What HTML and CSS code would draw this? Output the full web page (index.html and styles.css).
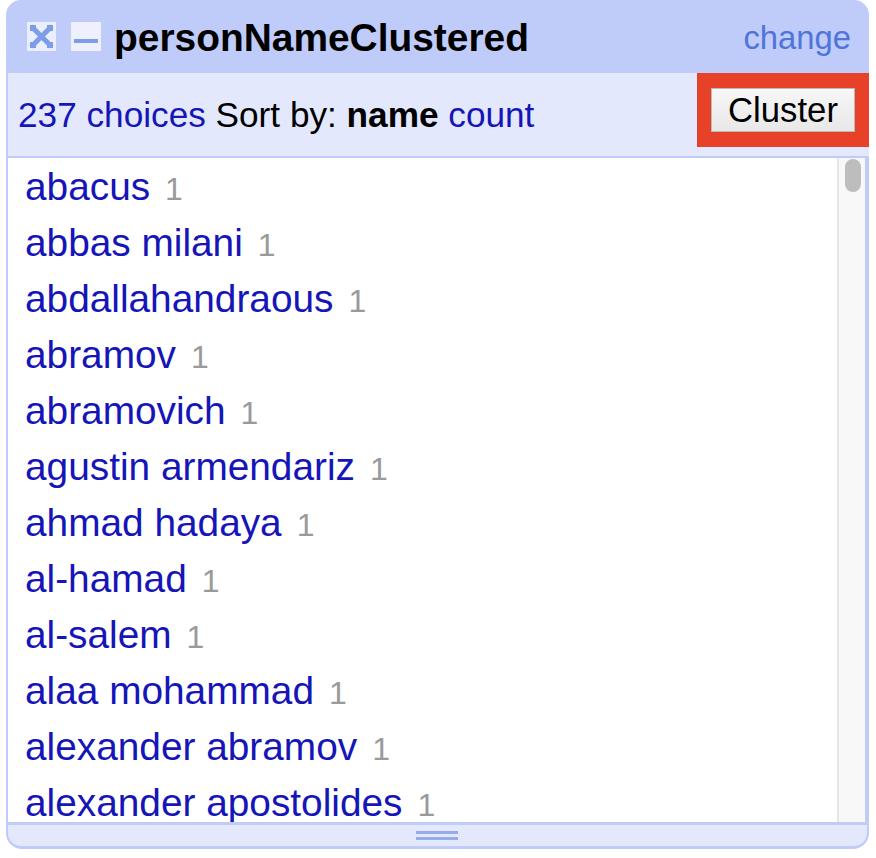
FILE: index.html
```html
<!DOCTYPE html>
<html>
<head>
<meta charset="utf-8">
<link rel="stylesheet" href="styles.css">
</head>
<body>
<div class="panel">
  <div class="header">
    <span class="icon">
      <svg width="29" height="29" viewBox="0 0 29 29">
        <rect width="29" height="29" fill="#eaeefd"/>
        <path d="M6 6 L23 23 M23 6 L6 23" stroke="#7d9de8" stroke-width="5" stroke-linecap="square"/>
        <rect x="3" y="3" width="6" height="6" fill="#7d9de8"/>
        <rect x="20" y="3" width="6" height="6" fill="#7d9de8"/>
        <rect x="3" y="20" width="6" height="6" fill="#7d9de8"/>
        <rect x="20" y="20" width="6" height="6" fill="#7d9de8"/>
      </svg>
    </span>
    <span class="icon">
      <svg width="30" height="29" viewBox="0 0 30 29">
        <rect width="30" height="29" fill="#eef1fd"/>
        <rect x="3" y="17" width="24" height="4" fill="#7d9de8"/>
      </svg>
    </span>
    <span class="title">personNameClustered</span>
    <a class="change">change</a>
  </div>
  <div class="controls">
    <div class="sort"><a class="link">237 choices</a> Sort by: <b>name</b> <a class="link">count</a></div>
    <div class="cluster-box"><button class="cluster-btn">Cluster</button></div>
  </div>
  <div class="body">
    <div class="choices">
      <div class="choice"><a class="name">abacus</a><span class="count">1</span></div>
      <div class="choice"><a class="name">abbas milani</a><span class="count">1</span></div>
      <div class="choice"><a class="name">abdallahandraous</a><span class="count">1</span></div>
      <div class="choice"><a class="name">abramov</a><span class="count">1</span></div>
      <div class="choice"><a class="name">abramovich</a><span class="count">1</span></div>
      <div class="choice"><a class="name">agustin armendariz</a><span class="count">1</span></div>
      <div class="choice"><a class="name">ahmad hadaya</a><span class="count">1</span></div>
      <div class="choice"><a class="name">al-hamad</a><span class="count">1</span></div>
      <div class="choice"><a class="name">al-salem</a><span class="count">1</span></div>
      <div class="choice"><a class="name">alaa mohammad</a><span class="count">1</span></div>
      <div class="choice"><a class="name">alexander abramov</a><span class="count">1</span></div>
      <div class="choice"><a class="name">alexander apostolides</a><span class="count">1</span></div>
    </div>
    <div class="scrollbar"><div class="thumb"></div></div>
  </div>
  <div class="footer"><div class="grip"></div></div>
</div>
</body>
</html>
```
FILE: styles.css
```css
html, body {
  margin: 0;
  padding: 0;
  background: #ffffff;
}

body {
  font-family: "Liberation Sans", Arial, sans-serif;
}

.panel {
  margin-left: 6px;
  width: 863px;
  background: #bfccf9;
  border-radius: 15px 15px 16px 16px;
  padding-bottom: 3px;
  display: flex;
  flex-direction: column;
}

.header {
  height: 73px;
  display: flex;
  align-items: center;
  padding-left: 21px;
  padding-right: 18px;
}

.icon {
  display: flex;
  margin-right: 15px;
}

.icon + .icon {
  margin-right: 13px;
}

.title {
  font-weight: bold;
  font-size: 38.9px;
  color: #000;
  flex: 1;
  line-height: 1;
  padding-top: 3px;
}

.change {
  font-size: 32.8px;
  color: #4f74da;
  line-height: 1;
  padding-top: 3px;
}

.controls {
  margin-left: 2px;
  height: 83px;
  background: #e3e8fc;
  display: flex;
  align-items: center;
  border-bottom: 2px solid #bfccf9;
}

.sort {
  flex: 1;
  font-size: 35.2px;
  color: #000;
  padding-left: 10px;
}

.sort b {
  font-weight: bold;
}

.link {
  color: #1515b8;
}

.cluster-box {
  align-self: flex-start;
  width: 172px;
  height: 74px;
  background: #e8412a;
  display: flex;
  align-items: center;
  justify-content: center;
}

.cluster-btn {
  width: 144px;
  height: 44px;
  font-family: "Liberation Sans", Arial, sans-serif;
  font-size: 34.7px;
  color: #000;
  background: linear-gradient(#f7f7f7, #e8e8e8);
  border: 1px solid #b9b9b9;
  padding: 0;
  line-height: 1;
}

.body {
  margin-left: 2px;
  margin-right: 4px;
  height: 664px;
  background: #ffffff;
  display: flex;
  overflow: hidden;
}

.choices {
  flex: 1;
  padding-top: 1px;
  padding-left: 17px;
  overflow: hidden;
}

.choice {
  height: 56px;
  line-height: 56px;
  white-space: nowrap;
}

.name {
  font-size: 38.8px;
  color: #1515b8;
}

.count {
  font-size: 32px;
  color: #9a9a9a;
  margin-left: 15px;
}

.scrollbar {
  width: 20px;
  border-left: 2px solid #e6e6e6;
  background: #f8f8f8;
  padding-left: 6px;
  padding-top: 1px;
}

.thumb {
  width: 16px;
  height: 33px;
  border-radius: 8px;
  background: #bdbdbd;
}

.footer {
  margin: 3px 2px 0 2px;
  height: 21px;
  background: #e3e8fc;
  border-radius: 0 0 13px 13px;
  display: flex;
  align-items: center;
  justify-content: center;
}

.grip {
  width: 42px;
  height: 3px;
  border-top: 3px solid #94acea;
  border-bottom: 3px solid #94acea;
  margin-right: 2px;
}
```
